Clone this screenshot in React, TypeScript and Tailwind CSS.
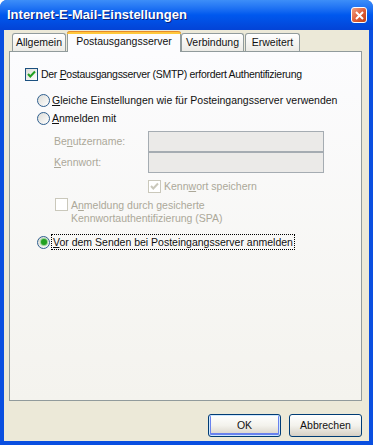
import React from "react";

const Check = ({ checked, disabled }: { checked?: boolean; disabled?: boolean }) => (
    <span
        className={
            "w-[13px] h-[13px] shrink-0 border flex items-center justify-center " +
            (disabled ? "border-[#cac8bb] bg-white" : "border-[#1c5180] bg-gradient-to-br from-[#dcdcd7] to-white")
        }
    >
        {checked && (
            <svg width="11" height="11" viewBox="0 0 11 11">
                <path d="M2 5 L4.3 7.5 L9 2.5" fill="none" stroke={disabled ? "#cac8bb" : "#21a121"} strokeWidth="2" />
            </svg>
        )}
    </span>
);

const Radio = ({ checked }: { checked?: boolean }) => (
    <span className="w-[13px] h-[13px] shrink-0 rounded-full border border-[#2f5f8f] bg-gradient-to-br from-[#dcdcd7] to-white flex items-center justify-center">
        {checked && <span className="w-[6px] h-[6px] rounded-full bg-[#21a121] shadow-[0_0_1px_1px_#8ed08e]" />}
    </span>
);

const Tab = ({ label, w }: { label: string; w: string }) => (
    <div
        className={
            w +
            " mt-[2px] h-[18px] border border-b-0 border-[#919b9c] rounded-t-[3px] bg-gradient-to-b from-white to-[#ecebe6] flex items-center justify-center"
        }
    >
        {label}
    </div>
);

const Button = ({ label, primary }: { label: string; primary?: boolean }) => (
    <button
        className={
            "w-[73px] h-[23px] rounded-[3px] border border-[#003c74] bg-gradient-to-b from-white via-[#f3f2ec] to-[#d6d0c5] text-[10.5px] " +
            (primary ? "shadow-[inset_0_0_0_1px_#cee7ff,inset_0_-1px_0_2px_#6982ee]" : "")
        }
    >
        {label}
    </button>
);

export default function App() {
    return (
        <div className="w-[373px] h-[445px] flex flex-col bg-[#0a4fe0] rounded-t-[7px] overflow-hidden font-['Liberation_Sans',Arial,sans-serif] text-[10.5px] text-[#111]">
            <div className="h-[30px] shrink-0 flex items-center justify-between pl-[7px] pr-[6px] bg-gradient-to-b from-[#3d8ef8] via-[#0058ee] to-[#0343d6]">
                <span className="text-white font-bold text-[13px] [text-shadow:1px_1px_0_#0a1f7a]">
                    Internet-E-Mail-Einstellungen
                </span>
                <span className="w-[16px] h-[16px] rounded-[3px] border border-white bg-gradient-to-br from-[#f0a283] via-[#e0603b] to-[#c2400f] flex items-center justify-center">
                    <svg width="9" height="9" viewBox="0 0 9 9">
                        <path d="M1 1 L8 8 M8 1 L1 8" stroke="white" strokeWidth="2" />
                    </svg>
                </span>
            </div>

            <div className="flex-1 mx-[4px] mb-[4px] bg-[#ece9d8] flex flex-col pt-[1px] pl-[5px] pr-[7px]">
                <div className="relative z-10 flex h-[20px] items-start pl-[3px]">
                    <Tab label="Allgemein" w="w-[54px]" />
                    <div className="w-[114px] ml-[1px] h-[21px] border border-b-0 border-[#919b9c] border-t-0 rounded-t-[3px] bg-[#fcfcfe] flex flex-col">
                        <div className="h-[3px] -mx-[1px] rounded-t-[3px] bg-[#ffc83c] border-t border-[#e68b2c]" />
                        <div className="flex-1 flex items-center justify-center pb-[2px]">Postausgangsserver</div>
                    </div>
                    <Tab label="Verbindung" w="w-[63px]" />
                    <Tab label="Erweitert" w="w-[55px] ml-[1px]" />
                </div>

                <div className="h-[350px] border border-[#919b9c] bg-gradient-to-b from-[#fcfcfe] to-[#f4f3ee] pl-[15px] pt-[16px] flex flex-col">
                    <div className="flex items-center gap-[3px] h-[13px]">
                        <Check checked />
                        <span className="tracking-[-0.3px]">
                            Der <u>P</u>ostausgangsserver (SMTP) erfordert Authentifizierung
                        </span>
                    </div>

                    <div className="flex items-center gap-[2px] h-[13px] mt-[13px] ml-[12px]">
                        <Radio />
                        <span>
                            <u>G</u>leiche Einstellungen wie für Posteingangsserver verwenden
                        </span>
                    </div>
                    <div className="flex items-center gap-[2px] h-[13px] mt-[5px] ml-[12px]">
                        <Radio />
                        <span>
                            <u>A</u>nmelden mit
                        </span>
                    </div>

                    <div className="flex items-center mt-[6px] ml-[29px] text-[#aca899]">
                        <span className="w-[94px]">
                            Be<u>n</u>utzername:
                        </span>
                        <div className="w-[176px] h-[21px] border border-[#a5acb2] bg-[#ebeae8]" />
                    </div>
                    <div className="flex items-center ml-[29px] text-[#aca899]">
                        <span className="w-[94px]">
                            <u>K</u>ennwort:
                        </span>
                        <div className="w-[176px] h-[21px] border border-[#a5acb2] bg-[#ebeae8]" />
                    </div>

                    <div className="flex items-center gap-[3px] h-[13px] mt-[7px] ml-[123px] text-[#aca899]">
                        <Check checked disabled />
                        <span>
                            Kenn<u>w</u>ort speichern
                        </span>
                    </div>

                    <div className="flex items-start gap-[3px] mt-[5px] ml-[30px] text-[#aca899] leading-[13px]">
                        <Check disabled />
                        <span className="mt-[1px]">
                            A<u>n</u>meldung durch gesicherte
                            <br />
                            Kennwortauthentifizierung (SPA)
                        </span>
                    </div>

                    <div className="flex items-center gap-[1px] h-[16px] mt-[9px] ml-[12px]">
                        <Radio checked />
                        <span className="border border-dotted border-black px-[1px] leading-[14px]">
                            <u>V</u>or dem Senden bei Posteingangsserver anmelden
                        </span>
                    </div>
                </div>

                <div className="flex justify-end gap-[8px] pt-[13px]">
                    <Button label="OK" primary />
                    <Button label="Abbrechen" />
                </div>
            </div>
        </div>
    );
}
